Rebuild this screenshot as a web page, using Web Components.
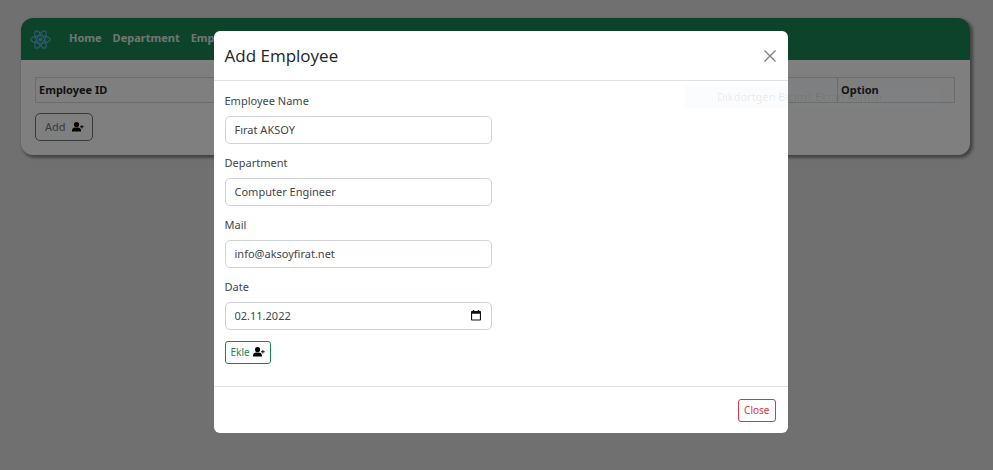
<!DOCTYPE html>
<html lang="tr">
<head>
<meta charset="utf-8">
<title>Employee</title>
<style>
html, body { height: 100%; }
body { margin: 0; background: #e0e0e0; color: #212529; font: 11px/18px "Noto Sans", "Open Sans", sans-serif; overflow: hidden; }
</style>
</head>
<body>
<employee-app></employee-app>

<template id="app-t">
<style>
:host { display: block; min-height: 100vh; position: relative; box-sizing: border-box; padding: 18px 23px 0 21px; }
main { background: #fff; border-radius: 12px; box-shadow: 2px 2px 3px 1px #888; overflow: hidden; }
.content { padding: 17px 15px 14px 14px; }
.layer { position: absolute; inset: 0; background: rgba(0,0,0,.5); display: grid; justify-items: center; align-items: start; padding: 31px 12px 12px 20px; }
snip-tip { position: absolute; top: 86px; right: 55px; }
</style>
<main>
  <nav-bar></nav-bar>
  <div class="content">
    <employee-table></employee-table>
    <ui-button kind="secondary">Add</ui-button>
  </div>
</main>
<div class="layer">
  <modal-dialog>
    <span slot="title">Add Employee</span>
    <form-field label="Employee Name" value="Fırat AKSOY"></form-field>
    <form-field label="Department" value="Computer Engineer"></form-field>
    <form-field label="Mail" value="info@aksoyfirat.net"></form-field>
    <form-field label="Date" value="02.11.2022" calendar></form-field>
    <ui-button kind="success">Ekle</ui-button>
    <ui-button slot="footer" kind="danger">Close</ui-button>
  </modal-dialog>
</div>
<snip-tip>Dikdörtgen Biçimli Ekran Alıntısı</snip-tip>
</template>

<template id="nav-t">
<style>
:host { display: block; background: #198754; }
nav { display: flex; align-items: center; height: 42px; padding: 0 9px; gap: 11px; }
svg { width: 21px; height: 21px; margin-right: 7px; display: block; }
a { color: #fff; opacity: .85; font-weight: 700; text-decoration: none; padding-bottom: 2px; }
</style>
<nav>
  <svg viewBox="0 0 42 40" fill="none" stroke="#61b5e8" stroke-width="2.2"><circle cx="21" cy="20" r="3.8" fill="#61b5e8" stroke="none"/><ellipse cx="21" cy="20" rx="19.5" ry="7.4"/><ellipse cx="21" cy="20" rx="19.5" ry="7.4" transform="rotate(60 21 20)"/><ellipse cx="21" cy="20" rx="19.5" ry="7.4" transform="rotate(120 21 20)"/></svg>
  <a href="#home">Home</a><a href="#department">Department</a><a href="#employee">Employee</a>
</nav>
</template>

<template id="table-t">
<style>
:host { display: block; margin-bottom: 10px; }
table { width: 100%; border-collapse: collapse; table-layout: fixed; }
th { border: 1px solid #d6d8db; padding: 2px 3px 3px; height: 19px; text-align: left; font-weight: 700; white-space: nowrap; }
th:last-child { width: 110px; }
</style>
<table><thead><tr><th>Employee ID</th><th></th><th></th><th>Option</th></tr></thead></table>
</template>

<template id="button-t">
<style>
:host { display: inline-flex; }
button { display: flex; align-items: center; gap: 3px; height: 23px; padding: 0 5px 1px; font: inherit; font-size: 10px; line-height: 16px; background: transparent; border: 1px solid; border-radius: 3px; cursor: pointer; }
svg { width: 12px; height: 12px; display: block; fill: #000; }
:host([kind=success]) button { color: #198754; }
:host([kind=danger]) button { color: #dc3545; }
:host([kind=danger]) svg { display: none; }
:host([kind=secondary]) button { color: #6c757d; height: 28px; padding: 0 8px 0 9px; gap: 6px; font-size: 11px; border-radius: 5px; }
</style>
<button type="button"><slot></slot><svg viewBox="0 0 24 24" aria-hidden="true"><circle cx="9" cy="7" r="5.2"/><path d="M0 21v-2c0-3.800 3-6 6.300-6h5.400c3.300 0 6.300 2.200 6.300 6v2zM18.900 8h1.700v2.600h2.800v1.700h-2.800v2.600h-1.700v-2.600h-2.800v-1.700h2.800z"/></svg></button>
</template>

<template id="modal-t">
<style>
:host { display: block; width: 100%; max-width: 574px; background: #fff; border-radius: 6px; }
header { display: flex; align-items: center; justify-content: space-between; height: 49px; padding: 0 11px; border-bottom: 1px solid #dee2e6; }
h2 { margin: 0; font: 500 17px/24px "Open Sans", "Noto Sans", sans-serif; }
header button { border: 0; background: none; padding: 0; width: 14px; height: 14px; }
header svg { display: block; width: 14px; height: 14px; stroke: #808080; stroke-width: 1.3; fill: none; }
.body { display: flex; flex-direction: column; align-items: flex-start; gap: 10px; padding: 11px 11px 22px; }
footer { display: flex; justify-content: flex-end; padding: 12px 12px 11px; border-top: 1px solid #dee2e6; }
::slotted(ui-button:not([slot])) { margin-top: 1px; }
</style>
<div role="dialog" aria-labelledby="t">
<header><h2 id="t"><slot name="title"></slot></h2><button type="button" aria-label="Dismiss"><svg viewBox="0 0 14 14"><path d="M1.500 1.500l11 11M12.500 1.500l-11 11"/></svg></button></header>
<div class="body"><slot></slot></div>
<footer><slot name="footer"></slot></footer>
</div>
</template>

<template id="field-t">
<style>
:host { display: flex; flex-direction: column; gap: 6px; width: 267px; max-width: 100%; }
label { color: #40464c; }
.box { display: flex; align-items: center; box-sizing: border-box; height: 28px; border: 1px solid #ced4da; border-radius: 5px; padding: 0 9px; }
input { flex: 1; min-width: 0; height: 18px; border: 0; outline: 0; padding: 0 0 1px; background: none; font: inherit; color: #40464c; }
button { display: none; border: 0; background: none; padding: 0 1px 1px 0; }
:host([calendar]) button { display: block; }
svg { display: block; width: 10px; height: 11px; }
</style>
<label for="i"></label>
<div class="box"><input id="i" type="text"><button type="button" aria-label="Calendar"><svg viewBox="0 0 11 12"><path d="M2 0h1.500v1h4V0H9v1h1q1 0 1 1v8.500q0 1-1 1H1q-1 0-1-1V2q0-1 1-1h1zM1.200 4v6.300h8.600V4z" fill="#111" fill-rule="evenodd"/></svg></button></div>
</template>

<template id="tip-t">
<style>
:host { display: block; box-sizing: border-box; width: 253px; padding: 2px 0 2px 32px; white-space: nowrap; pointer-events: none; background: rgba(130,150,180,.03); color: rgba(0,0,0,.09); }
</style>
<slot></slot>
</template>

<script>
const define = (name, templateId, setup) => customElements.define(name, class extends HTMLElement {
  constructor() {
    super();
    this.attachShadow({ mode: 'open' }).append(document.getElementById(templateId).content.cloneNode(true));
  }
  connectedCallback() { if (setup) setup(this, this.shadowRoot); }
});
define('nav-bar', 'nav-t');
define('employee-table', 'table-t');
define('ui-button', 'button-t');
define('form-field', 'field-t', (host, root) => {
  root.querySelector('label').textContent = host.getAttribute('label');
  root.querySelector('input').value = host.getAttribute('value');
});
define('modal-dialog', 'modal-t');
define('snip-tip', 'tip-t');
define('employee-app', 'app-t');
</script>
</body>
</html>
